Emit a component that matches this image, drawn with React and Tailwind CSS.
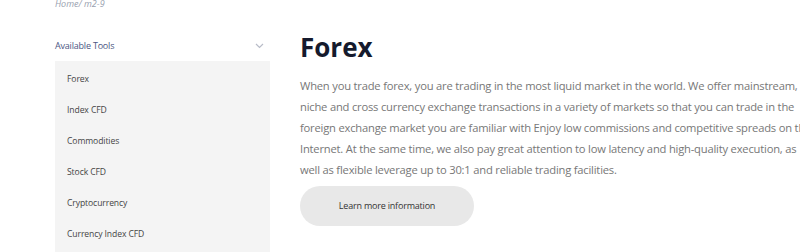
const tools = ['Forex', 'Index CFD', 'Commodities', 'Stock CFD', 'Cryptocurrency', 'Currency Index CFD'];

const lines = [
    'When you trade forex, you are trading in the most liquid market in the world. We offer mainstream,',
    'niche and cross currency exchange transactions in a variety of markets so that you can trade in the',
    'foreign exchange market you are familiar with Enjoy low commissions and competitive spreads on the',
    'Internet. At the same time, we also pay great attention to low latency and high-quality execution, as',
    'well as flexible leverage up to 30:1 and reliable trading facilities.',
];

const App = () => {
    return (
        <div className="w-[800px] h-[252px] overflow-hidden bg-white flex font-['Open_Sans',sans-serif]">
            <div className="ml-[55px] w-[215px] shrink-0 flex flex-col">
                <div className="text-[9px] italic text-gray-400 leading-none -mt-[1px]">Home/ m2-9</div>
                <div className="mt-[28px] h-[20px] flex items-center justify-between pr-[6px]">
                    <span className="text-[9px] tracking-[-0.2px] text-[#4b5683]">Available Tools</span>
                    <svg width="9" height="6" viewBox="0 0 9 6" fill="none" stroke="#b8bcc8" strokeWidth="1.2">
                        <path d="M1 1l3.5 3.5L8 1" />
                    </svg>
                </div>
                <div className="mt-[5px] flex-1 bg-[#f4f4f4] pt-[3px]">
                    {tools.map((t) => (
                        <div key={t} className="h-[31px] flex items-center pl-[12px] text-[8.6px] tracking-[-0.1px] text-[#444]">
                            {t}
                        </div>
                    ))}
                </div>
            </div>
            <div className="ml-[30px] flex flex-col shrink-0">
                <h1 className="mt-[33px] text-[26px] font-bold text-[#151a2d] leading-[28px]">Forex</h1>
                <div className="mt-[14px] text-[11.2px] tracking-[-0.2px] leading-[21px] text-[#777] whitespace-nowrap">
                    {lines.map((l) => (
                        <div key={l}>{l}</div>
                    ))}
                </div>
                <button className="mt-[6px] w-[174px] h-[40px] rounded-full bg-[#e8e8e8] text-[9px] tracking-[-0.2px] text-[#333]">
                    Learn more information
                </button>
            </div>
        </div>
    );
};

export default App;
